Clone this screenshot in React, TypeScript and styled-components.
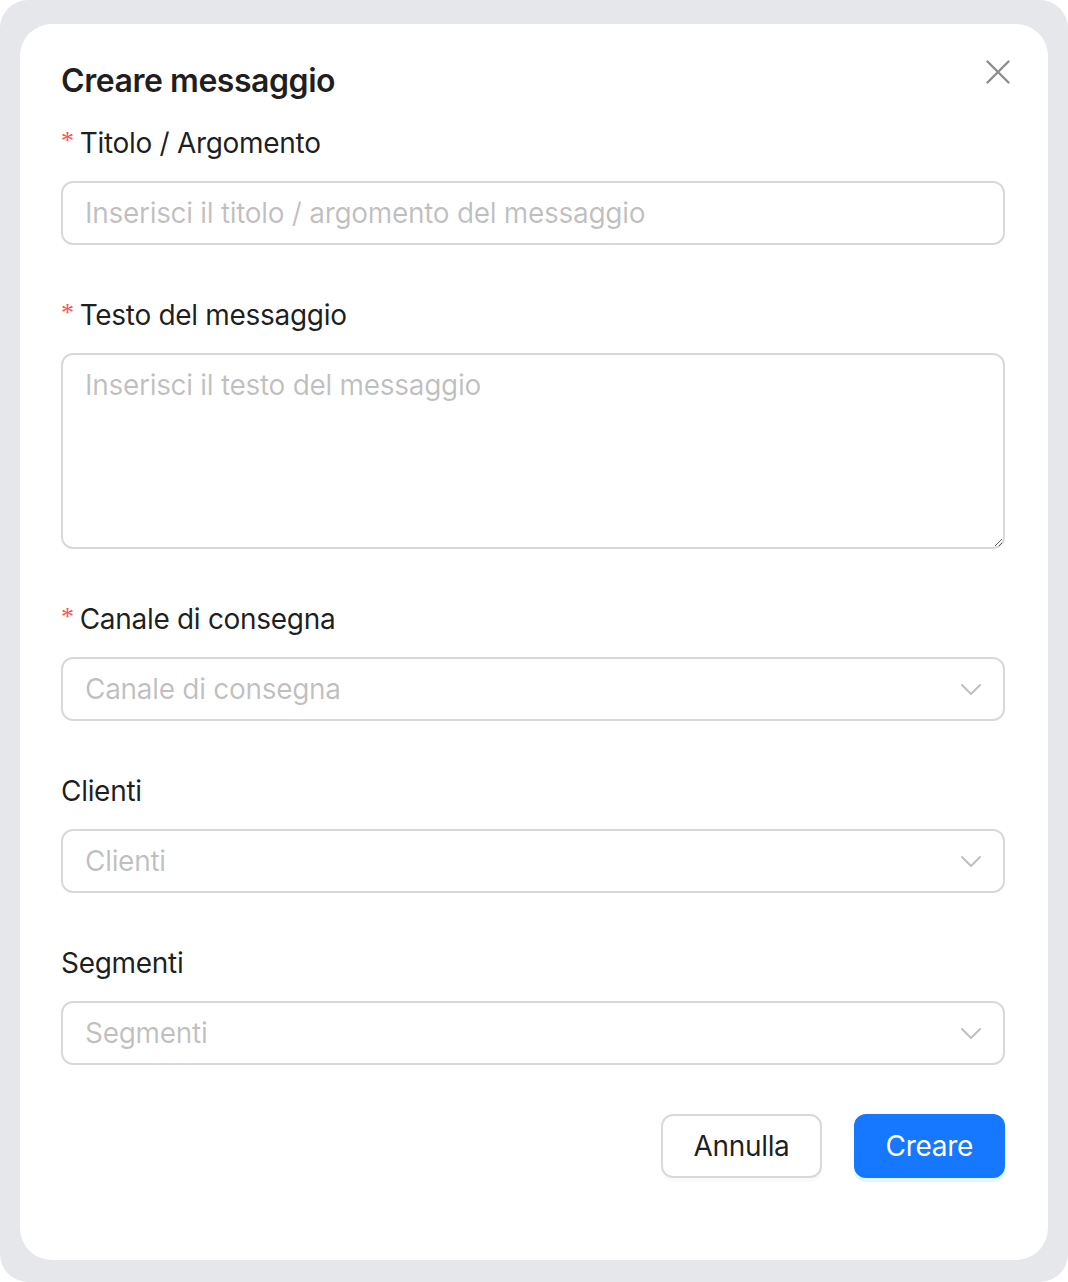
import styled, { createGlobalStyle } from "styled-components";

const GlobalStyle = createGlobalStyle`
  html, body {
    margin: 0;
    padding: 0;
    background: #ffffff;
  }
  body {
    font-family: Inter, "Noto Sans", "Liberation Sans", sans-serif;
    color: rgba(0, 0, 0, 0.88);
  }
  * {
    box-sizing: border-box;
  }
`;

const Page = styled.div`
  width: 1068px;
  height: 1282px;
  background: #e5e7eb;
  border-radius: 28px;
  padding: 24px 20px 22px 20px;
`;

const Card = styled.div`
  background: #ffffff;
  border-radius: 32px;
  height: 1236px;
  padding: 33px 43px 82px 41px;
  display: flex;
  flex-direction: column;
`;

const Header = styled.div`
  display: flex;
  justify-content: space-between;
  align-items: flex-start;
  margin-bottom: 16px;
`;

const Title = styled.h2`
  margin: 0;
  font-size: 32px;
  line-height: 48px;
  font-weight: 600;
  letter-spacing: -0.45px;
  color: rgba(0, 0, 0, 0.88);
`;

const CloseButton = styled.button`
  border: none;
  background: transparent;
  padding: 0;
  margin: 3px -5px 0 0;
  width: 24px;
  height: 24px;
  display: flex;
  align-items: center;
  justify-content: center;
  color: rgba(0, 0, 0, 0.45);
  cursor: pointer;
`;

const Item = styled.div`
  margin-bottom: 48px;
`;

const Label = styled.label`
  display: flex;
  align-items: center;
  height: 44px;
  font-size: 28px;
  line-height: 44px;
  letter-spacing: -0.3px;
  margin-bottom: 16px;
  color: rgba(0, 0, 0, 0.88);
`;

const Star = styled.span`
  color: #ff4d4f;
  font-family: "Liberation Serif", serif;
  font-size: 26px;
  line-height: 1;
  margin-right: 6px;
  position: relative;
  top: -2px;
`;

const fieldBase = `
  width: 100%;
  border: 2px solid #d9d9d9;
  border-radius: 12px;
  font-family: Inter, "Noto Sans", "Liberation Sans", sans-serif;
  font-size: 28px;
  letter-spacing: -0.3px;
  color: rgba(0, 0, 0, 0.88);
  background: #ffffff;
  outline: none;
  &::placeholder {
    color: rgba(0, 0, 0, 0.25);
  }
`;

const Input = styled.input`
  ${fieldBase}
  height: 64px;
  padding: 0 22px;
`;

const TextArea = styled.textarea`
  ${fieldBase}
  display: block;
  height: 196px;
  padding: 8px 22px;
  line-height: 44px;
  resize: vertical;
`;

const Select = styled.div`
  ${fieldBase}
  height: 64px;
  padding: 0 22px;
  display: flex;
  align-items: center;
  justify-content: space-between;
`;

const Placeholder = styled.span`
  color: rgba(0, 0, 0, 0.25);
`;

const Chevron = styled.span`
  display: flex;
  color: rgba(0, 0, 0, 0.25);
`;

const Footer = styled.div`
  display: flex;
  justify-content: flex-end;
  gap: 32px;
  margin-top: 1px;
`;

const Button = styled.button<{ $primary?: boolean }>`
  height: 64px;
  padding: 0 30px;
  border-radius: 12px;
  font-family: Inter, "Noto Sans", "Liberation Sans", sans-serif;
  font-size: 28px;
  letter-spacing: -0.3px;
  cursor: pointer;
  border: 2px solid ${(p) => (p.$primary ? "#1677ff" : "#d9d9d9")};
  background: ${(p) => (p.$primary ? "#1677ff" : "#ffffff")};
  color: ${(p) => (p.$primary ? "#ffffff" : "rgba(0, 0, 0, 0.88)")};
  box-shadow: ${(p) =>
    p.$primary ? "0 4px 0 rgba(5, 145, 255, 0.1)" : "0 4px 0 rgba(0, 0, 0, 0.02)"};
`;

const DownIcon = () => (
  <svg width="20" height="11" viewBox="0 0 20 11" fill="none">
    <path d="M1 1 L10 10 L19 1" stroke="currentColor" strokeWidth="2" strokeLinecap="round" strokeLinejoin="round" />
  </svg>
);

const CloseIcon = () => (
  <svg width="24" height="24" viewBox="0 0 24 24" fill="none">
    <path d="M1.5 1.5 L22.5 22.5 M22.5 1.5 L1.5 22.5" stroke="currentColor" strokeWidth="2.4" strokeLinecap="round" />
  </svg>
);

const SelectField = ({ placeholder }: { placeholder: string }) => (
  <Select>
    <Placeholder>{placeholder}</Placeholder>
    <Chevron>
      <DownIcon />
    </Chevron>
  </Select>
);

const App = () => {
  return (
    <>
      <GlobalStyle />
      <Page>
        <Card>
          <Header>
            <Title>Creare messaggio</Title>
            <CloseButton aria-label="Close">
              <CloseIcon />
            </CloseButton>
          </Header>

          <Item>
            <Label>
              <Star>*</Star>Titolo / Argomento
            </Label>
            <Input placeholder="Inserisci il titolo / argomento del messaggio" />
          </Item>

          <Item>
            <Label>
              <Star>*</Star>Testo del messaggio
            </Label>
            <TextArea placeholder="Inserisci il testo del messaggio" />
          </Item>

          <Item>
            <Label>
              <Star>*</Star>Canale di consegna
            </Label>
            <SelectField placeholder="Canale di consegna" />
          </Item>

          <Item>
            <Label>Clienti</Label>
            <SelectField placeholder="Clienti" />
          </Item>

          <Item>
            <Label>Segmenti</Label>
            <SelectField placeholder="Segmenti" />
          </Item>

          <Footer>
            <Button>Annulla</Button>
            <Button $primary>Creare</Button>
          </Footer>
        </Card>
      </Page>
    </>
  );
};

export default App;
